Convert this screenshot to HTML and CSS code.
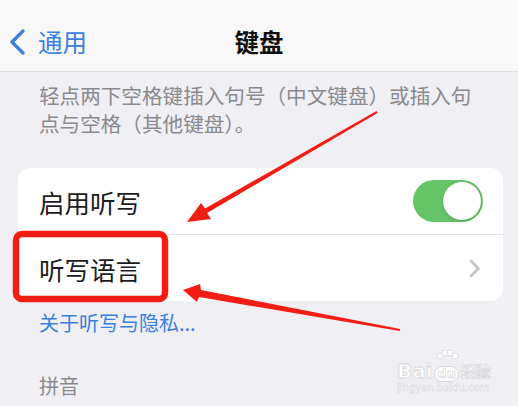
FILE: index.html
```html
<!DOCTYPE html>
<html lang="zh-CN">
<head>
  <meta charset="UTF-8">
  <title>键盘</title>
  <link rel="stylesheet" href="styles.css">
</head>
<body>

  <div class="nav">
    <div class="back">
      <svg class="back-icon" width="18" height="26" viewBox="0 0 18 26">
        <path d="M15 2 L4 13 L15 24" fill="none" stroke="#3b7fe0" stroke-width="3.2" stroke-linecap="round" stroke-linejoin="round"/>
      </svg>
      <span>通用</span>
    </div>
    <div class="title">键盘</div>
    <div></div>
  </div>

  <p class="note">轻点两下空格键插入句号（中文键盘）或插入句点与空格（其他键盘）。</p>

  <div class="card">
    <div class="row">
      <span>启用听写</span>
      <span class="switch"><span class="knob"></span></span>
    </div>
    <div class="row">
      <span>听写语言</span>
      <svg class="chevron" width="12" height="19" viewBox="0 0 12 19">
        <path d="M2 2 L9.5 9.5 L2 17" fill="none" stroke="#c4c4c8" stroke-width="2.6" stroke-linecap="round" stroke-linejoin="round"/>
      </svg>
    </div>
  </div>

  <div class="link">关于听写与隐私...</div>

  <div class="section-title">拼音</div>

  <!-- annotation marks over the screenshot -->
  <svg class="marks" width="518" height="406" viewBox="0 0 518 406">
    <rect x="16" y="234" width="149" height="65" rx="6" fill="none" stroke="#f41d14" stroke-width="6.5"/>
    <polygon fill="#f41d14" points="377.5,112.9 207,213 211,219 187,222 201,203 205,208.5 376.5,111.1"/>
    <polygon fill="#f41d14" points="400.2,329 201,290 200,284 183,290 197,302 199,297 399.8,331"/>
  </svg>

  <div class="watermark">
    <div class="wm-logo">
      <span>Bai</span>
      <span class="paw">
        <svg width="26" height="16" viewBox="0 0 26 16">
          <circle cx="6" cy="6" r="3" fill="#fff" stroke="#dcdce0"/>
          <circle cx="11" cy="3" r="3" fill="#fff" stroke="#dcdce0"/>
          <circle cx="16" cy="3" r="3" fill="#fff" stroke="#dcdce0"/>
          <circle cx="21" cy="6" r="3" fill="#fff" stroke="#dcdce0"/>
        </svg>
        <span class="du">du</span>
      </span>
      <span>经验</span>
    </div>
    <div class="wm-url">jingyan.baidu.com</div>
  </div>

</body>
</html>
```

FILE: styles.css
```css
body {
  margin: 0;
  width: 518px;
  height: 406px;
  overflow: hidden;
  position: relative;
  background: #efeff4;
  font-family: "Noto Sans CJK SC", "Noto Sans", sans-serif;
  color: #1c1c1e;
}
.nav {
  background: #f8f8f8;
  border-bottom: 1px solid #dedee2;
  display: grid;
  grid-template-columns: 1fr auto 1fr;
  align-items: center;
  padding-top: 12px;
  box-sizing: content-box;
  height: 59px;
}
.back {
  display: flex;
  align-items: center;
  padding-left: 8px;
  color: #3b7fe0;
  font-size: 24.5px;
}
.back-icon {
  margin-right: 12px;
}
.title {
  font-size: 24.5px;
  font-weight: 700;
  color: #111;
}
.note {
  margin: 9px 0 31px;
  padding: 0 39px;
  font-size: 20.6px;
  line-height: 28px;
  color: #8a8a8e;
}
.card {
  margin: 0 15px 0 18px;
  background: #fff;
  border-radius: 12px;
}
.row {
  height: 66px;
  display: flex;
  align-items: center;
  justify-content: space-between;
  padding: 0 20px 0 21px;
  font-size: 25.5px;
}
.row + .row {
  border-top: 1px solid #e3e3e6;
  margin-left: 21px;
  padding-left: 0;
  padding-right: 22px;
}
.switch {
  width: 70px;
  height: 42px;
  border-radius: 21px;
  background: #65c466;
  display: flex;
  align-items: center;
  justify-content: flex-end;
  padding: 0 2px;
  box-sizing: border-box;
}
.knob {
  width: 38px;
  height: 38px;
  border-radius: 50%;
  background: #fff;
  box-shadow: 0 1px 3px rgba(0, 0, 0, 0.2);
}
.link {
  margin-top: 8px;
  padding-left: 39px;
  font-size: 20px;
  line-height: 28px;
  color: #3b7fe0;
}
.section-title {
  margin-top: 35px;
  padding-left: 39px;
  font-size: 20px;
  line-height: 28px;
  color: #8a8a8e;
}
.marks {
  position: absolute;
  left: 0;
  top: 0;
  pointer-events: none;
}
.watermark {
  position: absolute;
  left: 397px;
  top: 350px;
  width: 95px;
  color: #fff;
  font-family: "DejaVu Sans", sans-serif;
}
.wm-logo {
  display: flex;
  align-items: flex-end;
  font-size: 20px;
  font-weight: bold;
  line-height: 22px;
  -webkit-text-stroke: 0.8px #d8d8dc;
}
.paw {
  display: flex;
  flex-direction: column;
  align-items: center;
  margin: 0 1px;
}
.du {
  font-size: 13px;
  line-height: 14px;
  background: #fff;
  border: 1px solid #d8d8dc;
  border-radius: 8px;
  padding: 0 2px;
  -webkit-text-stroke: 0.6px #d0d0d4;
  color: #fff;
}
.wm-logo > span:last-child {
  font-family: "Noto Sans CJK SC", sans-serif;
  font-size: 15px;
}
.wm-url {
  font-size: 10px;
  line-height: 12px;
  -webkit-text-stroke: 0.5px #d8d8dc;
}
```
